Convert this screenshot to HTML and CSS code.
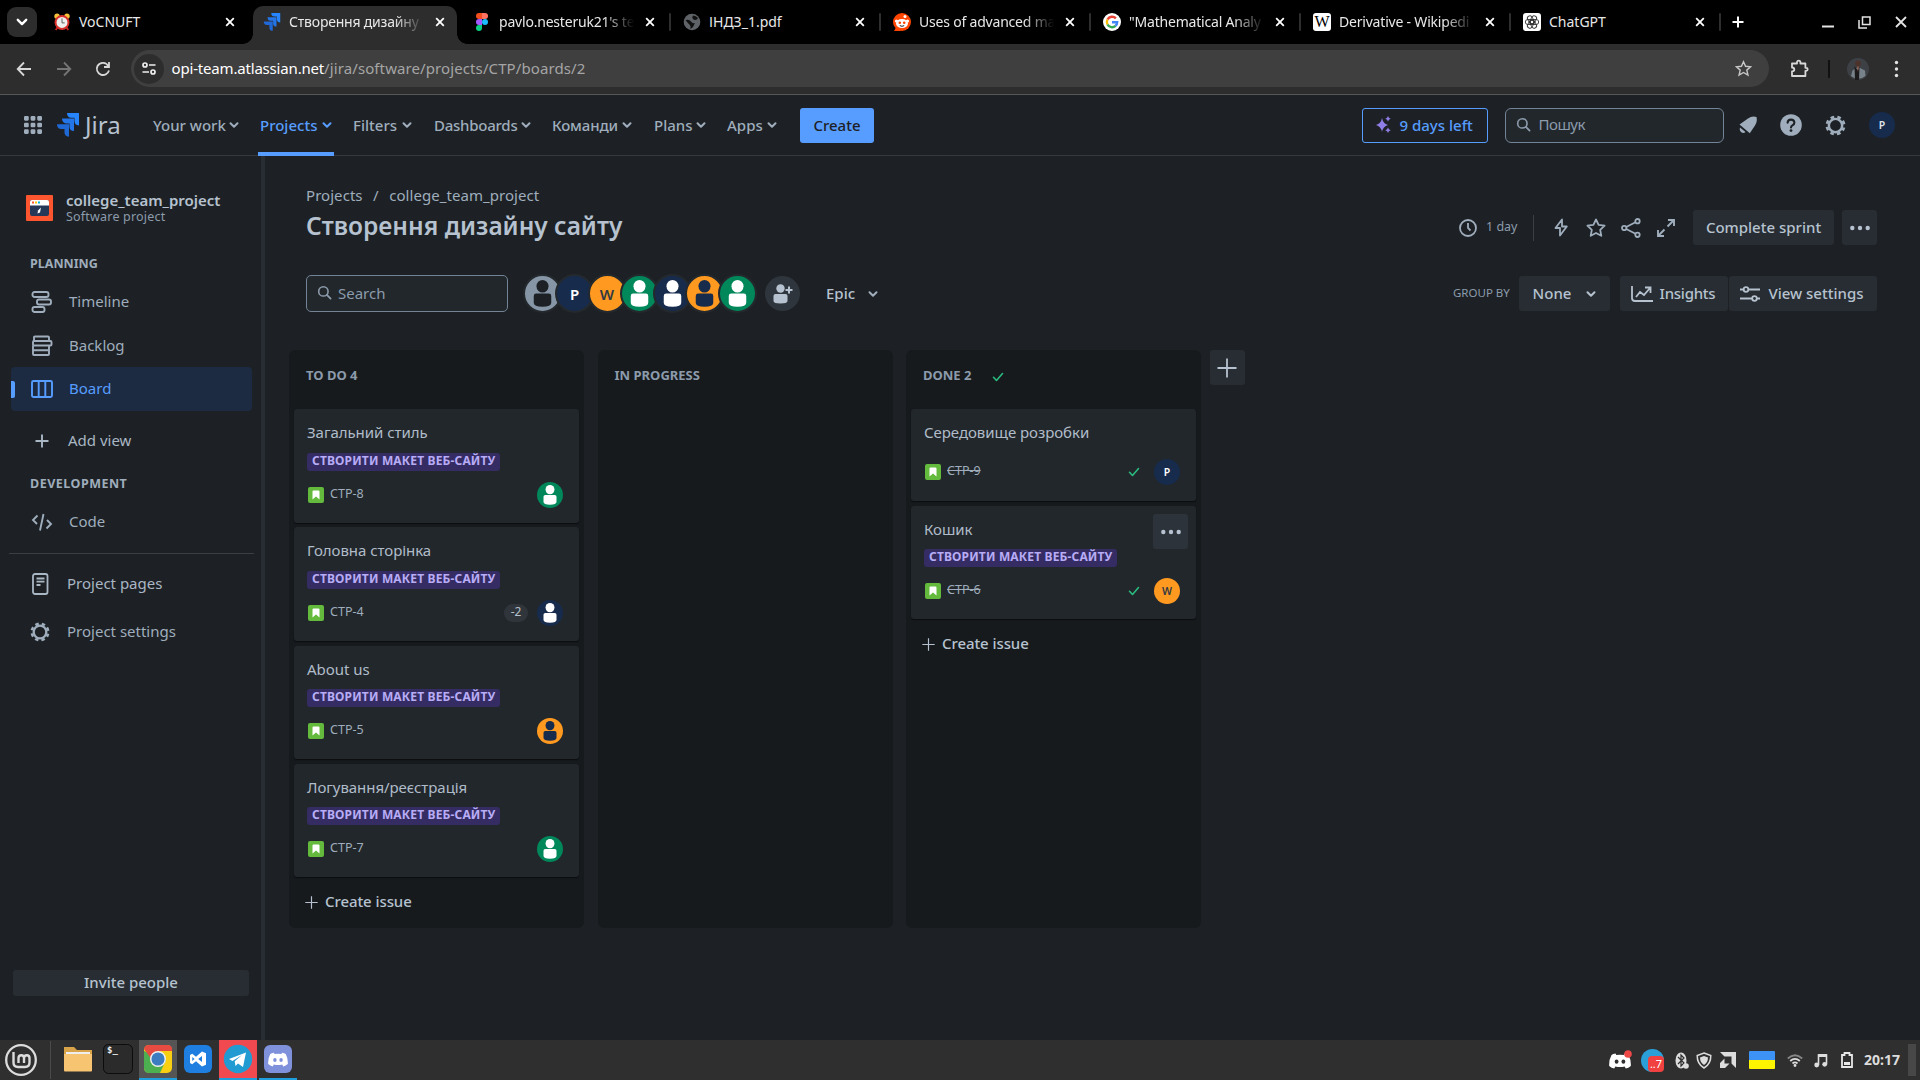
FILE: index.html
```html
<!DOCTYPE html>
<html lang="uk">
<head>
<meta charset="utf-8">
<title>Створення дизайну сайту</title>
<link rel="stylesheet" href="styles.css">
</head>
<body>
<svg class="defs" aria-hidden="true">
  <symbol id="x" viewBox="0 0 10 10"><path d="M1.2 1.2l7.6 7.6M8.8 1.2L1.2 8.8" fill="none" stroke="currentColor" stroke-width="1.8"/></symbol>
  <symbol id="chev" viewBox="0 0 10 10"><path d="M1.5 3.2L5 6.700l3.500-3.500" fill="none" stroke="currentColor" stroke-width="2" stroke-linecap="round" stroke-linejoin="round"/></symbol>
  <symbol id="jira" viewBox="0 0 22 24"><path d="M10 0h12v12.500c-3 0-4.500-2-4.500-4.200V4.800H14.200C11.700 4.800 10 3 10 0z" fill="#2684ff"/><path d="M5 5.600h12v12.500c-3 0-4.500-2-4.500-4.200v-3.500H9.200C6.700 10.400 5 8.600 5 5.600z" fill="#2375e8"/><path d="M0 11.200h12v12.500c-3 0-4.500-2-4.500-4.200V16H4.200C1.700 16 0 14.200 0 11.200z" fill="#2068d5"/></symbol>
  <symbol id="search" viewBox="0 0 16 16"><circle cx="6.800" cy="6.800" r="5" fill="none" stroke="currentColor" stroke-width="1.700"/><path d="M10.500 10.500l4 4" stroke="currentColor" stroke-width="1.900" stroke-linecap="round"/></symbol>
  <symbol id="gear" viewBox="0 0 24 24"><circle cx="12" cy="12" r="7.600" fill="none" stroke="currentColor" stroke-width="2.800"/><circle cx="12" cy="12" r="9.900" fill="none" stroke="currentColor" stroke-width="3" stroke-dasharray="4.200 3.575" stroke-dashoffset="2.100" transform="rotate(22.500 12 12)"/></symbol>
  <symbol id="person" viewBox="0 0 36 36"><ellipse cx="18" cy="10.500" rx="6.200" ry="6.500" fill="currentColor"/><path d="M9 20.500q0-2.500 2.500-2.500h13q2.500 0 2.500 2.500v7q0 4-9 4t-9-4z" fill="currentColor"/></symbol>
  <symbol id="plus" viewBox="0 0 20 20"><path d="M10 0.500v19M0.500 10h19" stroke="currentColor" stroke-width="1.800" fill="none"/></symbol>
  <symbol id="dots" viewBox="0 0 20 6"><circle cx="2.300" cy="3" r="2.200" fill="currentColor"/><circle cx="10" cy="3" r="2.200" fill="currentColor"/><circle cx="17.700" cy="3" r="2.200" fill="currentColor"/></symbol>
  <symbol id="check" viewBox="0 0 12 10"><path d="M1.500 5.300l3 3.200 6-7" fill="none" stroke="#2abb7f" stroke-width="1.600" stroke-linecap="round" stroke-linejoin="round"/></symbol>
  <symbol id="story" viewBox="0 0 16 16"><rect width="16" height="16" rx="2" fill="#63ba3c"/><path d="M4.500 4.600q0-1 1-1h5q1 0 1 1v8L8 9.600l-3.500 3z" fill="#fff"/></symbol>
  <symbol id="discord" viewBox="0 0 22 16"><path d="M6.500.6 7.300 2q3.700-.6 7.400 0l.8-1.400q2.400.4 4 1.400 2.700 5 2.300 11-2.300 2-5 2.600l-1.200-2.200q-4.600 1.400-9.200 0L5.200 15.600Q2.500 15 .2 13-.2 7 2.500 2q1.600-1 4-1.400z" fill="#fff"/><ellipse cx="7.600" cy="8.600" rx="1.900" ry="2.200" fill="currentColor"/><ellipse cx="14.400" cy="8.600" rx="1.900" ry="2.200" fill="currentColor"/></symbol>
</svg>

<header class="tabs">
  <div class="tabsearch"><svg width="12" height="12"><use href="#chev"/></svg></div>
  <div class="tab"><svg class="fav" viewBox="0 0 18 20"><circle cx="3.500" cy="3.500" r="3" fill="#f5c33b"/><circle cx="14.500" cy="3.500" r="3" fill="#f5c33b"/><path d="M4 16l-2 3M14 16l2 3" stroke="#c22" stroke-width="2"/><circle cx="9" cy="10.500" r="7.200" fill="#eee" stroke="#d9302c" stroke-width="2.200"/><path d="M9 6v5h3" stroke="#555" fill="none"/></svg><span class="tt">VoCNUFT</span><svg class="close"><use href="#x"/></svg></div>
  <div class="tab active"><svg class="fav"><use href="#jira"/></svg><span class="tt fade">Створення дизайну</span><svg class="close"><use href="#x"/></svg></div>
  <div class="tab sep"><svg class="fav" viewBox="0 0 12 18"><path d="M3 0h3v6H3a3 3 0 010-6z" fill="#f24e1e"/><path d="M6 0h3a3 3 0 010 6H6z" fill="#ff7262"/><path d="M3 6h3v6H3a3 3 0 010-6z" fill="#a259ff"/><circle cx="9" cy="9" r="3" fill="#1abcfe"/><path d="M3 12h3v3a3 3 0 11-3-3z" fill="#0acf83"/></svg><span class="tt fade">pavlo.nesteruk21's te</span><svg class="close"><use href="#x"/></svg></div>
  <div class="tab sep"><svg class="fav" viewBox="0 0 18 18"><circle cx="9" cy="9" r="8.300" fill="#5f6368"/><path d="M2.500 7q4-1 5.500 1.500T12 10l-2 4-2.500 2q.5-3.500-1-4.500T2.500 7zM10 2.500q-1.500 2 0 3.500t4 .5l1-1.500Q13 2.500 10 2.500z" fill="#111"/></svg><span class="tt">ІНДЗ_1.pdf</span><svg class="close"><use href="#x"/></svg></div>
  <div class="tab sep"><svg class="fav" viewBox="0 0 18 18"><circle cx="9" cy="9" r="9" fill="#ff4500"/><path d="M1 18l3-5 4 5z" fill="#ff4500"/><ellipse cx="9" cy="10.500" rx="6" ry="4.600" fill="#fff"/><circle cx="3.500" cy="8" r="1.600" fill="#fff"/><circle cx="14.500" cy="8" r="1.600" fill="#fff"/><circle cx="12" cy="3.500" r="1.500" fill="#fff"/><circle cx="6.800" cy="9.800" r="1.300" fill="#ff4500"/><circle cx="11.200" cy="9.800" r="1.300" fill="#ff4500"/><path d="M6.800 12.600q2.200 1.400 4.400 0" stroke="#222" fill="none"/></svg><span class="tt fade">Uses of advanced ma</span><svg class="close"><use href="#x"/></svg></div>
  <div class="tab sep"><svg class="fav" viewBox="0 0 18 18"><circle cx="9" cy="9" r="9" fill="#fff"/><g fill="none" stroke-width="2.400"><path d="M12.900 5.400A5.200 5.200 0 004.500 6.500" stroke="#ea4335"/><path d="M4.500 6.500a5.200 5.200 0 000 5" stroke="#fbbc05"/><path d="M4.500 11.500a5.200 5.200 0 008 1.400" stroke="#34a853"/><path d="M12.500 12.900A5 5 0 0014.200 9.300H9" stroke="#4285f4"/></g></svg><span class="tt fade">"Mathematical Analy</span><svg class="close"><use href="#x"/></svg></div>
  <div class="tab sep"><span class="fav wiki">W</span><span class="tt fade">Derivative - Wikipedi</span><svg class="close"><use href="#x"/></svg></div>
  <div class="tab sep"><svg class="fav" viewBox="0 0 18 18"><rect width="18" height="18" rx="3" fill="#fff"/><g fill="none" stroke="#333" stroke-width=".9"><rect x="6.500" y="2.300" width="5" height="8.500" rx="2.500" transform="rotate(30 9 9)"/><rect x="6.500" y="2.300" width="5" height="8.500" rx="2.500" transform="rotate(90 9 9)"/><rect x="6.500" y="2.300" width="5" height="8.500" rx="2.500" transform="rotate(150 9 9)"/><rect x="6.500" y="2.300" width="5" height="8.500" rx="2.500" transform="rotate(210 9 9)"/><rect x="6.500" y="2.300" width="5" height="8.500" rx="2.500" transform="rotate(270 9 9)"/><rect x="6.500" y="2.300" width="5" height="8.500" rx="2.500" transform="rotate(330 9 9)"/></g></svg><span class="tt">ChatGPT</span><svg class="close"><use href="#x"/></svg></div>
  <svg class="newtab" width="12" height="12" viewBox="0 0 12 12"><path d="M6 .5v11M.5 6h11" stroke="#fff" stroke-width="2"/></svg>
  <div class="wincontrols">
    <svg width="12" height="18" viewBox="0 0 12 18"><path d="M0 13.500h12" stroke="#e3e3e3" stroke-width="2"/></svg>
    <svg width="13" height="13" viewBox="0 0 13 13"><path d="M4.500 1h7.500v7.500H4.500zM1 4v8h8" fill="none" stroke="#e3e3e3" stroke-width="1.500"/></svg>
    <svg width="12" height="12" viewBox="0 0 12 12"><path d="M1 1l10 10M11 1L1 11" stroke="#e3e3e3" stroke-width="1.800"/></svg>
  </div>
</header>

<div class="toolbar">
  <svg class="tb" viewBox="0 0 16 16"><path d="M15 8H2M8 1.500L1.700 8 8 14.500" fill="none" stroke="#d8d8d8" stroke-width="1.800"/></svg>
  <svg class="tb" viewBox="0 0 16 16"><path d="M1 8h13M8 1.500L14.300 8 8 14.500" fill="none" stroke="#757575" stroke-width="1.800"/></svg>
  <svg class="tb" viewBox="0 0 16 16"><path d="M14 9.500A6.200 6.200 0 112.500 5 6.200 6.200 0 0113.500 5.500M14 1v5H9" fill="none" stroke="#d8d8d8" stroke-width="1.800"/></svg>
  <div class="omnibox">
    <span class="site"><svg width="14" height="13" viewBox="0 0 14 13"><g fill="none" stroke="#eee" stroke-width="1.700"><circle cx="3" cy="3" r="2"/><path d="M7 3h6.500M.5 10H7"/><circle cx="11" cy="10" r="2"/></g></svg></span>
    <span class="url"><b>opi-team.atlassian.net</b><span>/jira/software/projects/CTP/boards/2</span></span>
    <svg width="17" height="17" viewBox="0 0 18 18"><path d="M9 1.800l2.200 4.900 5.300.5-4 3.500 1.200 5.200L9 13.200l-4.700 2.700 1.200-5.200-4-3.500 5.300-.5z" fill="none" stroke="#c7c7c7" stroke-width="1.500"/></svg>
  </div>
  <svg class="ext" width="19" height="19" viewBox="0 0 19 19"><path d="M2 4.500h5V3.300a1.700 1.700 0 013.400 0v1.200h5v4.300h.8a1.500 1.500 0 010 3h-.8V17H2v-4.500q2.300-.2 2.300-2T2 8.500z" fill="none" stroke="#d8d8d8" stroke-width="1.800" stroke-linejoin="round"/></svg>
  <i class="tsep"></i>
  <svg class="me" width="22" height="22" viewBox="0 0 22 22"><circle cx="11" cy="11" r="11" fill="#3d4146"/><circle cx="11" cy="5.500" r="3" fill="#4b332c"/><path d="M4 18l1.500-5.500L9 10h4l5 2.500.5 5.500a11 11 0 01-14.500 0z" fill="#78828a"/><path d="M7.500 8l3 4 2-3-.5 13H8z" fill="#1c1a1b"/><path d="M10 8.500l1 5.500 1-5.500z" fill="#8c5b49"/></svg>
  <svg class="kebab" width="5" height="18" viewBox="0 0 5 18"><g fill="#e3e3e3"><circle cx="2.500" cy="2.500" r="1.700"/><circle cx="2.500" cy="9" r="1.700"/><circle cx="2.500" cy="15.500" r="1.700"/></g></svg>
</div>

<nav class="jnav">
  <svg class="grid9" width="18" height="18" viewBox="0 0 19 19"><g fill="#9fadbc"><rect width="5" height="5" rx="1.200"/><rect x="7" width="5" height="5" rx="1.200"/><rect x="14" width="5" height="5" rx="1.200"/><rect y="7" width="5" height="5" rx="1.200"/><rect x="7" y="7" width="5" height="5" rx="1.200"/><rect x="14" y="7" width="5" height="5" rx="1.200"/><rect y="14" width="5" height="5" rx="1.200"/><rect x="7" y="14" width="5" height="5" rx="1.200"/><rect x="14" y="14" width="5" height="5" rx="1.200"/></g></svg>
  <svg class="jl"><use href="#jira"/></svg><span class="jt">Jira</span>
  <div class="menus">
    <span class="m m1"><span>Your work</span><svg><use href="#chev"/></svg></span>
    <span class="m m2 on"><span>Projects</span><svg><use href="#chev"/></svg></span>
    <span class="m m3"><span>Filters</span><svg><use href="#chev"/></svg></span>
    <span class="m m4"><span>Dashboards</span><svg><use href="#chev"/></svg></span>
    <span class="m m5"><span>Команди</span><svg><use href="#chev"/></svg></span>
    <span class="m m6"><span>Plans</span><svg><use href="#chev"/></svg></span>
    <span class="m m7"><span>Apps</span><svg><use href="#chev"/></svg></span>
  </div>
  <button class="create">Create</button>
  <span class="grow"></span>
  <div class="trial"><svg width="15" height="17" viewBox="0 0 15 17"><g fill="#8f7ee7"><path d="M6 2q1 5.500 6 7-5 1.500-6 7-1-5.500-6-7 5-1.500 6-7z"/><path d="M12 0q.5 2.200 2.700 2.700-2.200.5-2.700 2.700-.5-2.200-2.700-2.700Q11.500 2.200 12 0zM12 11.500q.5 2.200 2.700 2.700-2.200.5-2.700 2.700-.5-2.200-2.700-2.700 2.200-.5 2.700-2.700z"/></g></svg><span>9 days left</span></div>
  <div class="nsearch"><svg width="15" height="15"><use href="#search"/></svg><span>Пошук</span></div>
  <svg class="ni bell" width="20" height="20" viewBox="0 0 20 20"><path d="M10 3.500Q14 .5 18.500 2q1.200 4.500-1.500 8.500l-5.200 7.700L1.500 9.500z" fill="#9fadbc"/><path d="M2 12.500l5.500 4.500q-2 1.800-4.200.2T2 12.500z" fill="#9fadbc"/></svg>
  <svg class="ni" width="22" height="22" viewBox="0 0 22 22"><circle cx="11" cy="11" r="10.800" fill="#9fadbc"/><path d="M7.600 8.700Q7.900 5.600 11 5.600T14.400 8.500q0 1.700-1.700 2.600T11 13.400" fill="none" stroke="#1d2125" stroke-width="2.100" stroke-linecap="round"/><circle cx="11" cy="16.600" r="1.400" fill="#1d2125"/></svg>
  <svg class="ni" width="21" height="21"><use href="#gear"/></svg>
  <span class="nava">P</span>
</nav>

<div class="app">
  <aside class="side">
    <div class="proj"><svg width="27" height="26" viewBox="0 0 27 26"><rect width="27" height="26" rx="1" fill="#ff5630"/><rect x="4" y="5" width="19" height="16" rx="2" fill="#253858"/><path d="M4 10.500V7q0-2 2-2h15q2 0 2 2v3.500z" fill="#fff"/><path d="M6 6.500h2v2H6z" fill="#ff5630"/><path d="M9 6.500h2v2H9z" fill="#ffc400"/><path d="M12 6.500h2v2h-2z" fill="#00b8d9"/><path d="M15 12.500l-1 5-2.500 1 .5-3z" fill="#fff"/></svg>
      <div><div class="pn">college_team_project</div><div class="pt">Software project</div></div></div>
    <div class="sh s1">PLANNING</div>
    <div class="it i1"><svg viewBox="0 0 22 22"><g fill="none" stroke="currentColor" stroke-width="1.900"><rect x="1.500" y="1" width="16" height="5" rx="2"/><rect x="6" y="8.500" width="14" height="5" rx="2"/><rect x="1.500" y="16" width="12" height="5" rx="2"/></g></svg><span>Timeline</span></div>
    <div class="it i2"><svg viewBox="0 0 22 22"><g fill="none" stroke="currentColor" stroke-width="1.900"><path d="M3 6V2.500Q3 1.500 4 1.500h13q1 0 1 1V6M18 10.500V19q0 1-1 1H3q-1 0-1-1v-8.500M2 15.300h16"/><rect x="2" y="6" width="18.500" height="4.500" rx="1"/></g></svg><span>Backlog</span></div>
    <div class="it i3 sel"><svg viewBox="0 0 22 22"><g fill="none" stroke="currentColor" stroke-width="1.900"><rect x="1" y="3" width="20" height="16" rx="1.500"/><path d="M7.700 3v16M14.300 3v16"/></g></svg><span>Board</span></div>
    <div class="it i4"><svg viewBox="0 0 22 22"><path d="M11 4.500v13M4.500 11h13" stroke="currentColor" stroke-width="1.900"/></svg><span>Add view</span></div>
    <div class="sh s2">DEVELOPMENT</div>
    <div class="it i5"><svg viewBox="0 0 22 22"><path d="M6.500 4.500L2 9l4 4M16 9l4 4-4.500 4.500M12.500 3L9 19.500" fill="none" stroke="currentColor" stroke-width="1.900"/></svg><span>Code</span></div>
    <hr>
    <div class="it i6"><svg viewBox="0 0 22 22"><g fill="none" stroke="currentColor" stroke-width="1.800"><rect x="4" y="1" width="14.500" height="20" rx="2"/><path d="M7.500 5.500h8M7.500 8.700h8M7.500 12h4"/></g></svg><span>Project pages</span></div>
    <div class="it i7"><svg viewBox="0 0 22 22"><use href="#gear" x="1" y="1" width="20" height="20"/></svg><span>Project settings</span></div>
    <button class="invite"><span>Invite people</span></button>
  </aside>

  <main class="main">
    <div class="crumbs"><span>Projects</span><i>/</i><span>college_team_project</span></div>
    <div class="head">
      <h1>Створення дизайну сайту</h1>
      <div class="acts">
        <svg width="18" height="18" viewBox="0 0 18 18"><circle cx="9" cy="9" r="8" fill="none" stroke="currentColor" stroke-width="1.800"/><path d="M9 4v5l2.500 2.500" fill="none" stroke="currentColor" stroke-width="1.800"/></svg>
        <span class="day">1 day</span><i class="vs"></i>
        <svg class="a1" width="14" height="19" viewBox="0 0 14 19"><path d="M8 1.500L1.500 10H6v7.500L12.800 8.500H8z" fill="none" stroke="currentColor" stroke-width="1.800" stroke-linejoin="round"/></svg>
        <svg class="a2" width="20" height="20" viewBox="0 0 20 20"><path d="M10 1.500l2.600 5.400 6 .8-4.400 4.100 1.100 6L10 15l-5.300 2.800 1.100-6L1.400 7.700l6-.8z" fill="none" stroke="currentColor" stroke-width="1.800" stroke-linejoin="round"/></svg>
        <svg class="a3" width="20" height="20" viewBox="0 0 20 20"><g fill="none" stroke="currentColor" stroke-width="1.800"><circle cx="3.200" cy="10" r="2.200"/><circle cx="16.500" cy="3.200" r="2.200"/><circle cx="16.500" cy="16.800" r="2.200"/><path d="M5.200 9l9.300-4.800M5.200 11l9.300 4.800"/></g></svg>
        <svg class="a4" width="18" height="18" viewBox="0 0 18 18"><path d="M11 1h6v6M17 1l-6.500 6.500M7 17H1v-6M1 17l6.500-6.500" fill="none" stroke="currentColor" stroke-width="1.900"/></svg>
        <button class="btn b1"><span>Complete sprint</span></button>
        <button class="btn more"><svg width="20" height="6"><use href="#dots"/></svg></button>
      </div>
    </div>
    <div class="filters">
      <div class="fsearch"><svg width="15" height="15"><use href="#search"/></svg><span>Search</span></div>
      <div class="avs">
        <span class="av gray"><svg><use href="#person"/></svg></span><span class="av navy">P</span><span class="av orange w">W</span><span class="av green"><svg><use href="#person"/></svg></span><span class="av navy"><svg><use href="#person"/></svg></span><span class="av orange"><svg><use href="#person"/></svg></span><span class="av green"><svg><use href="#person"/></svg></span>
      </div>
      <span class="addp"><svg width="20" height="22" viewBox="0 0 20 22"><circle cx="7.500" cy="5.500" r="4.200" fill="#b6c2cf"/><path d="M.5 13q0-2 2-2h10q2 0 2 2v5q0 2.500-7 2.500T.500 18z" fill="#b6c2cf"/><path d="M16 3.500v7M12.500 7h7" stroke="#b6c2cf" stroke-width="2"/></svg></span>
      <span class="epic">Epic</span><svg width="10" height="10"><use href="#chev"/></svg>
      <span class="grow"></span>
      <span class="gb">GROUP BY</span>
      <button class="btn none"><span>None</span><svg width="10" height="10"><use href="#chev"/></svg></button>
      <button class="btn ins"><svg width="22" height="16" viewBox="0 0 22 16"><path d="M1 0v12q0 3 3 3h18M5 11l4-5 4 3 6-7M14 1.500h5.500V7" fill="none" stroke="currentColor" stroke-width="1.800"/></svg><span>Insights</span></button>
      <button class="btn vset"><svg width="20" height="16" viewBox="0 0 20 16"><g fill="none" stroke="currentColor" stroke-width="1.800"><path d="M0 3.500h3.500M8.500 3.500H20M0 12.500h12M17 12.500h3"/><circle cx="6" cy="3.500" r="2.300"/><circle cx="14.500" cy="12.500" r="2.300"/></g></svg><span>View settings</span></button>
    </div>
    <div class="board">
      <section class="col">
        <h2><span>TO DO 4</span></h2>
        <article class="card"><h3>Загальний стиль</h3><span class="tag">СТВОРИТИ МАКЕТ ВЕБ-САЙТУ</span><div class="row"><svg class="st"><use href="#story"/></svg><span class="key">СТР-8</span><span class="av green"><svg><use href="#person"/></svg></span></div></article>
        <article class="card"><h3>Головна сторінка</h3><span class="tag">СТВОРИТИ МАКЕТ ВЕБ-САЙТУ</span><div class="row"><svg class="st"><use href="#story"/></svg><span class="key">СТР-4</span><span class="est">-2</span><span class="av navy"><svg><use href="#person"/></svg></span></div></article>
        <article class="card c3"><h3>About us</h3><span class="tag">СТВОРИТИ МАКЕТ ВЕБ-САЙТУ</span><div class="row"><svg class="st"><use href="#story"/></svg><span class="key">СТР-5</span><span class="av orange"><svg><use href="#person"/></svg></span></div></article>
        <article class="card c3"><h3>Логування/реєстрація</h3><span class="tag">СТВОРИТИ МАКЕТ ВЕБ-САЙТУ</span><div class="row"><svg class="st"><use href="#story"/></svg><span class="key">СТР-7</span><span class="av green"><svg><use href="#person"/></svg></span></div></article>
        <div class="ci"><svg width="13" height="13"><use href="#plus"/></svg><span>Create issue</span></div>
      </section>
      <section class="col"><h2><span>IN PROGRESS</span></h2></section>
      <section class="col">
        <h2><span>DONE 2</span><svg class="ck"><use href="#check"/></svg></h2>
        <article class="card short"><h3>Середовище розробки</h3><div class="row"><svg class="st"><use href="#story"/></svg><span class="key done">СТР-9</span><svg class="ck"><use href="#check"/></svg><span class="av navy">P</span></div></article>
        <article class="card c3"><h3>Кошик</h3><span class="tag">СТВОРИТИ МАКЕТ ВЕБ-САЙТУ</span><div class="row"><svg class="st"><use href="#story"/></svg><span class="key done">СТР-6</span><svg class="ck"><use href="#check"/></svg><span class="av orange w">W</span></div><button class="btn cm"><svg width="20" height="6"><use href="#dots"/></svg></button></article>
        <div class="ci"><svg width="13" height="13"><use href="#plus"/></svg><span>Create issue</span></div>
      </section>
      <button class="btn addcol"><svg width="20" height="20"><use href="#plus"/></svg></button>
    </div>
  </main>
</div>

<footer class="panel">
  <svg class="mint" width="32" height="32" viewBox="0 0 32 32"><circle cx="16" cy="16" r="14.800" fill="none" stroke="#dcdcdc" stroke-width="2.300"/><path d="M8.500 8v10.500Q8.500 23 13 23h7q4.500 0 4.500-4.500V14q0-2.700-2.700-2.700T19 14v5M19 14q0-2.700-2.700-2.700T13.500 14v5" fill="none" stroke="#dcdcdc" stroke-width="2.400"/></svg>
  <i class="psep"></i>
  <div class="apps">
    <span class="ap"><svg viewBox="0 0 30 30"><path d="M1 3h10l3 3h15v8H1z" fill="#d9a349"/><path d="M3 8h24v4H3z" fill="#eee"/><path d="M1 10h28v16.500q0 1-1 1H2q-1 0-1-1z" fill="#f7c472"/></svg></span>
    <span class="ap"><svg viewBox="0 0 30 30"><rect x=".5" y=".5" width="29" height="29" rx="5" fill="#2b2b2b" stroke="#0c0c0c"/></svg><em>$_</em></span>
    <span class="ap cur"><svg viewBox="0 0 30 30"><rect x="1" y="1" width="28" height="28" rx="5" fill="#f9cf12"/><path d="M1 7v17q0 5 5 5h11l6-13z" fill="#4caf50"/><path d="M1 9V6q0-5 5-5h18q5 0 5 4v2H15l-6 9L1 5z" fill="#e54b41"/><circle cx="15" cy="15" r="7.300" fill="#3b7dc0" stroke="#eee" stroke-width="1.500"/></svg></span>
    <span class="ap"><svg viewBox="0 0 30 30"><rect x="1" y="1" width="28" height="28" rx="6" fill="#1e7fe0"/><path d="M19 7.500l4 1.700v11.600l-4 1.700-6-5.300-3.800 3L7 19v-8l2.200-1.200 3.800 3zM19 12l-3.800 3 3.800 3zM9.300 13v4l2.200-2z" fill="#fff" fill-rule="evenodd"/></svg></span>
    <span class="ap red"><svg viewBox="0 0 30 30"><circle cx="15" cy="15" r="14.200" fill="#229bd3"/><path d="M6 15l17-6.500-3 14.500-5-3.500-2.500 2.500-.8-4.800L19 11l-9.500 6z" fill="#fff"/></svg></span>
    <span class="ap open"><svg viewBox="0 0 30 30"><rect x="1" y="1" width="28" height="28" rx="6" fill="#7f91db"/><g color="#7f91db"><use href="#discord" x="5" y="8" width="20" height="15"/></g></svg></span>
  </div>
  <span class="grow"></span>
  <div class="tray">
    <svg class="y1" width="24" height="20" viewBox="0 0 24 20"><g color="#303030"><use href="#discord" x="0" y="3" width="22" height="16"/></g><circle cx="19" cy="4" r="3.800" fill="#f04747"/></svg>
    <span class="tgt"><b>..7</b></span>
    <svg class="y3" width="14" height="17" viewBox="0 0 14 17"><ellipse cx="6" cy="8.500" rx="5.500" ry="8" fill="#ddd"/><path d="M3 5l6 6-3 3V3l3 3-6 6" fill="none" stroke="#303030" stroke-width="1.200"/><circle cx="11" cy="14" r="2.800" fill="#ddd"/></svg>
    <svg class="y4" width="16" height="17" viewBox="0 0 16 17"><path d="M8 1l6.800 2.500Q15 12 8 16 1 12 1.200 3.500z" fill="none" stroke="#ddd" stroke-width="1.500"/><path d="M8 4l4 1.500Q12 10.500 8 13 4 10.500 4 5.500z" fill="#ddd"/></svg>
    <svg class="y5" width="16" height="16" viewBox="0 0 16 16"><path d="M0 0h16v16l-4.500-4.500v-7h-7zM4.500 6.500v5h5L5 16H0v-5z" fill="#ddd"/></svg>
    <span class="flag"></span>
    <svg class="y6" width="16" height="13" viewBox="0 0 16 13"><g fill="none" stroke-width="1.800"><path d="M.8 4.500q7.200-6.500 14.400 0" stroke="#888"/><path d="M3.200 7q4.800-4.300 9.600 0M5.500 9.500q2.500-2.200 5 0" stroke="#ddd"/></g><circle cx="8" cy="11.500" r="1.400" fill="#ddd"/></svg>
    <svg class="y7" width="14" height="15" viewBox="0 0 14 15"><path d="M4.500 12V2h8v9" fill="none" stroke="#ddd" stroke-width="1.600"/><path d="M4 1h9v3H4z" fill="#ddd"/><circle cx="2.700" cy="12" r="2.400" fill="#ddd"/><circle cx="10.700" cy="11.300" r="2.400" fill="#ddd"/></svg>
    <svg class="y8" width="12" height="16" viewBox="0 0 12 16"><path d="M1 3h2.500V1h5v2H11v12H1z" fill="none" stroke="#e8e8e8" stroke-width="1.800"/><path d="M3 10h6v3H3z" fill="#e8e8e8"/></svg>
    <span class="time">20:17</span>
    <i class="edge"></i>
  </div>
</footer>
</body>
</html>
```
FILE: styles.css
```css
* { box-sizing: border-box; }
body { margin: 0; width: 1920px; height: 1080px; overflow: hidden; display: flex; flex-direction: column; background: #1d2125; color: #9fadbc; font: 15px/20px "Noto Sans", "Open Sans", sans-serif; }
svg { flex: none; display: block; }
button { font: inherit; color: inherit; border: 0; padding: 0; }
i, em { font-style: normal; }
span, h1, h2, h3 { white-space: nowrap; }
.defs { position: absolute; width: 0; height: 0; }
.grow { flex: 1; }

/* browser tab strip */
.tabs { flex: none; height: 44px; background: #000; display: flex; align-items: center; color: #e8e8e8; }
.tabsearch { width: 30px; height: 30px; margin: 0 6px 0 7px; border-radius: 9px; background: #2d2d2d; display: flex; align-items: center; justify-content: center; color: #fff; }
.tab { position: relative; width: 210px; height: 44px; padding: 0 9px 0 10px; display: flex; align-items: center; font-size: 14px; }
.tab .fav { width: 18px; height: 18px; margin-right: 8px; }
.tab .tt { width: 146px; }
.tab .fade { width: 138px; margin-right: 8px; letter-spacing: -.2px; -webkit-mask-image: linear-gradient(90deg, #000 76%, transparent 98%); mask-image: linear-gradient(90deg, #000 76%, transparent 98%); }
.tab .close { width: 10px; height: 10px; color: #fff; }
.tab.sep::after { content: ""; position: absolute; right: 2px; top: 13px; width: 2px; height: 18px; background: #2e2e2e; border-radius: 1px; }
.tab.active { z-index: 0; }
.tab.active::before { content: ""; position: absolute; z-index: -1; left: 0; right: 6px; top: 6px; bottom: 0; background: #2d2d2d; border-radius: 10px 10px 0 0; }
.tab.active::after { content: ""; position: absolute; z-index: -1; left: -10px; right: -4px; bottom: 0; height: 10px; background: radial-gradient(circle at 0 0, transparent 9.500px, #2d2d2d 10px) left / 10px 10px no-repeat, radial-gradient(circle at 100% 0, transparent 9.500px, #2d2d2d 10px) right / 10px 10px no-repeat; }
.wiki { display: flex; align-items: center; justify-content: center; background: #fff; color: #000; border-radius: 3px; font: 400 16px/18px "Liberation Serif", serif; }
.newtab { margin-left: 9px; }
.wincontrols { margin-left: auto; display: flex; gap: 24px; padding-right: 13px; align-items: center; }

/* address bar */
.toolbar { flex: none; height: 51px; background: #2d2d2d; border-bottom: 1px solid #565656; display: flex; align-items: center; padding: 0 21px 1px 16px; }
.tb { width: 16px; height: 16px; margin-right: 23.500px; }
.omnibox { width: 1638px; height: 37px; margin-left: -3.500px; border-radius: 19px; background: #3f3f3f; display: flex; align-items: center; padding: 0 17px 0 3px; }
.site { width: 30px; height: 30px; border-radius: 50%; background: #2d2d2d; display: flex; align-items: center; justify-content: center; }
.url { flex: 1; margin-left: 7.500px; padding-bottom: 1px; font-size: 15px; color: #a5a5a5; letter-spacing: .1px; }
.url b { font-weight: 400; color: #fff; letter-spacing: -.18px; }
.ext { margin-left: 20.500px; }
.tsep { width: 2px; height: 18px; margin-left: 19px; background: #111; }
.me { margin-left: 17px; }
.kebab { margin-left: auto; }

/* product navigation */
.jnav { flex: none; height: 61px; border-bottom: 1px solid #353a41; display: flex; align-items: center; padding: 0 25px 0 24px; font-weight: 500; }
.jl { margin-left: 15px; width: 22px; height: 24px; }
.jt { margin-left: 6px; width: 68px; font: 400 24px/30px "Noto Sans", sans-serif; color: #b6c2cf; }
.menus { display: flex; align-self: stretch; }
.m { display: flex; align-items: center; justify-content: space-between; position: relative; }
.m svg { width: 10px; height: 10px; }
.m1 { width: 86px; margin-right: 21px; }
.m2 { width: 72px; margin-right: 21px; color: #579dff; }
.m3 { width: 59px; margin-right: 22px; }
.m4 { width: 97px; margin-right: 21px; letter-spacing: -.25px; }
.m5 { width: 80px; margin-right: 22px; letter-spacing: -.15px; }
.m6 { width: 52px; margin-right: 21px; }
.m7 { width: 50px; margin-right: 23px; }
.m.on::after { content: ""; position: absolute; left: -2px; right: -2px; bottom: -1px; height: 4px; background: #579dff; }
.create { width: 74px; height: 35px; border-radius: 3px; background: #579dff; color: #1d2125; font-weight: 500; }
.trial { width: 126px; height: 35px; padding: 0 0 1px 13px; border: 1px solid #579dff; border-radius: 3px; color: #579dff; display: flex; align-items: center; gap: 9px; }
.nsearch { width: 219px; height: 35px; margin-left: 17px; padding: 0 0 2px 10px; border: 1px solid #738496; border-radius: 6px; background: #22272b; display: flex; align-items: center; gap: 8px; color: #8c9bab; font-weight: 400; letter-spacing: -.5px; }
.ni { margin-left: 22.500px; }
.ni.bell { margin-left: 14px; }
.nava { width: 26px; height: 26px; margin-left: 23.500px; border-radius: 50%; background: #172b4d; color: #dee4ea; font: 600 10.500px/26px "Noto Sans", sans-serif; text-align: center; }

/* sidebar */
.app { flex: 1; display: flex; min-height: 0; }
.side { width: 265px; border-right: 4px solid #282d33; padding: 34px 9px 0 11px; display: flex; flex-direction: column; }
.proj { display: flex; align-items: center; height: 36px; gap: 13px; padding-left: 15px; }
.pn { font-weight: 600; line-height: 18px; color: #b6c2cf; }
.pt { font-size: 12.500px; line-height: 16px; letter-spacing: .2px; color: #8c9bab; }
.sh { height: 20px; padding-left: 19px; font: 700 12.500px/20px "Noto Sans", sans-serif; color: #9fadbc; }
.s1 { margin: 28px 0 6px; }
.s2 { margin: 11px 0 14px; letter-spacing: .5px; }
.it { position: relative; height: 44px; display: flex; align-items: center; padding-left: 20px; border-radius: 4px; }
.it span { padding-bottom: 2px; }
.it svg { width: 22px; height: 22px; margin-right: 16px; }
.i2 { height: 43px; }
.i4 { margin-top: 8px; }
.i4 svg { margin-right: 15px; }
.i5 { height: 44px; margin-top: -8px; }
.i6, .i7 { padding-left: 18px; }
.i6, .i4 { color: #a9b6c4; }
.i7 { margin-top: 4px; }
.sel { width: 241px; background: #1c2b41; color: #579dff; }
.sel::before { content: ""; position: absolute; left: 0; top: 14px; width: 4px; height: 17px; border-radius: 0 2px 2px 0; background: #579dff; }
hr { width: 245px; margin: 9px 0 8px -2px; border: 0; border-top: 1px solid #3a3f46; height: 0; }
.invite { width: 236px; height: 26px; margin: 316px 0 0 2px; padding-bottom: 2px; border-radius: 3px; background: #282d33; color: #b6c2cf; font-weight: 500; }

/* board page */
.main { flex: 1; padding: 29px 43px 0 41px; }
.crumbs { display: flex; letter-spacing: .05px; }
.crumbs i { margin: 0 10.500px; }
.head { display: flex; justify-content: space-between; align-items: center; height: 35px; margin-top: 5px; }
h1 { margin: 0; padding-bottom: 4px; font: 600 24.500px/32px "Noto Sans", sans-serif; color: #b6c2cf; }
.acts { display: flex; align-items: center; }
.day { width: 47px; margin-left: 9px; padding-bottom: 2px; font-size: 12.500px; color: #8c9bab; }
.vs { width: 1px; height: 26px; background: #3a3f46; margin-right: 20px; }
.a2 { margin-left: 18px; }
.a3 { margin-left: 15px; }
.a4 { margin-left: 16px; }
.btn { height: 35px; border-radius: 3px; background: #282d33; color: #b6c2cf; font-weight: 500; display: flex; align-items: center; justify-content: center; }
.btn span { padding-bottom: 1px; }
.b1 { width: 141px; margin: 0 8px 0 18px; }
.more { width: 35px; }
.filters { display: flex; align-items: center; height: 37px; margin-top: 30px; }
.fsearch { width: 202px; height: 37px; padding: 0 0 2px 10px; border: 1px solid #738496; border-radius: 5px; background: #22272b; display: flex; align-items: center; gap: 6px; color: #8c9bab; }
.avs { display: flex; margin-left: 14.500px; }
.av { width: 39px; height: 39px; border-radius: 50%; border: 2px solid #24292e; display: flex; align-items: center; justify-content: center; color: #fff; font-weight: 600; }
.avs .av + .av { margin-left: -6.500px; }
.av svg { width: 35px; height: 35px; }
.gray { background: #8696a7; color: #1d2125; }
.navy { background: #172b4d; }
.orange { background: #ff991f; color: #172b4d; }
.green { background: #00875a; }
.w { color: #333a42; }
.addp { width: 35px; height: 35px; margin-left: 8.500px; border-radius: 50%; background: #2f353c; display: flex; align-items: center; justify-content: center; }
.epic { width: 42px; margin-left: 26px; padding-bottom: 1px; color: #b6c2cf; font-weight: 500; }
.gb { width: 66px; padding-bottom: 2px; font-size: 11.500px; color: #8c9bab; }
.none { width: 91px; margin-right: 10px; gap: 15px; }
.ins { width: 108px; gap: 7px; margin-right: 1px; padding-right: 2px; letter-spacing: -.25px; }
.vset { width: 148px; gap: 8px; padding-right: 2px; }

/* columns */
.board { display: flex; gap: 13.500px; margin: 38px 0 0 -17px; align-items: flex-start; }
.col { width: 295px; height: 578px; border-radius: 6px; background: #161a1d; padding: 0 5px; }
h2 { margin: 0; height: 59px; padding: 0 0 9px 12px; display: flex; align-items: center; gap: 21px; font: 700 13px/20px "Noto Sans", sans-serif; color: #8c9bab; }
.ck { width: 12px; height: 10px; }
h2 .ck { margin-top: 4px; }
.card { position: relative; height: 114px; margin-bottom: 4px; padding: 13px 13px 0; border-radius: 3px; background: #22272b; box-shadow: 0 1px 1px #0b0d0f; }
.card.c3 { height: 113px; margin-top: 5px; margin-bottom: 5px; padding-top: 13px; }
h3 { margin: 0 0 11px; font: 400 15px/20px "Noto Sans", sans-serif; letter-spacing: -.05px; color: #b0bcc9; }
.c3 h3 { margin-bottom: 10px; }
.tag { display: block; width: 193px; height: 18px; border-radius: 3px; background: #352c63; color: #b8acf6; padding-left: 5px; font: 700 12px/16px "Noto Sans", sans-serif; letter-spacing: .16px; }
.row { display: flex; align-items: center; height: 26px; margin-top: 11px; padding: 0 3px 0 1px; }
.st { width: 16px; height: 16px; margin: -1px 6px 0 0; }
.key { flex: 1; padding-bottom: 2px; font-size: 12.500px; color: #9fadbc; }
.done { text-decoration: line-through; }
.row .av { width: 26px; height: 26px; border: 0; font-size: 10.500px; }
.row .av svg { width: 26px; height: 26px; }
.row .ck { margin-right: 14px; }
.est { width: 24px; height: 18px; margin-right: 9px; border-radius: 9px; background: #2f353b; color: #b6c2cf; font-size: 12px; line-height: 16px; text-align: center; }
.short { height: 92px; }
.short .row { margin-top: 17px; }
.cm { position: absolute; top: 8px; right: 8px; width: 35px; background: #2c333a; }
.ci { display: flex; align-items: center; gap: 7px; height: 20px; margin-top: 15px; padding-left: 11px; font-weight: 500; letter-spacing: -.08px; color: #b6c2cf; }
.ci span { padding-bottom: 2px; }
.addcol { width: 35px; margin-left: -5px; }

/* desktop panel */
.panel { flex: none; height: 40px; background: #2f2f2f; display: flex; align-items: center; padding-left: 5px; }
.psep { width: 1px; height: 38px; margin: 0 8px 0 13px; background: #4a4a4a; }
.apps { display: flex; gap: 2px; }
.ap { position: relative; width: 38px; height: 40px; display: flex; justify-content: center; padding-top: 4px; border-bottom: 2px solid transparent; }
.ap svg { width: 30px; height: 30px; }
.ap em { position: absolute; left: 8px; top: 4px; font: 700 9px/12px "DejaVu Sans Mono", monospace; color: #eee; }
.cur { background: #555; border-color: #1f9ede; }
.red { background: #f04a50; border-color: #1f9ede; }
.open { border-color: #1f9ede; }
.tray { display: flex; align-items: center; }
.tgt { position: relative; width: 23px; height: 23px; margin: 0 11px 0 8px; border-radius: 50%; background: #2a9fd8; }
.tgt b { position: absolute; left: 7px; top: 7px; width: 16px; height: 16px; border-radius: 4px; background: #f0403f; color: #fff; font: 400 11px/16px "Noto Sans", sans-serif; text-align: center; }
.y4 { margin-left: 7px; }
.y5 { margin: 0 13px 0 8px; }
.flag { width: 26px; height: 18px; border-radius: 1px; background: linear-gradient(#3d93f5 50%, #fdf500 50%); }
.y6 { margin: 0 11px 0 12px; }
.y8 { margin-left: 13px; }
.time { width: 44px; margin-left: 11px; font: 700 14px/20px "Noto Sans", sans-serif; color: #dcdcdc; }
.edge { width: 8px; height: 32px; margin-right: 4px; background: #474747; }
```
